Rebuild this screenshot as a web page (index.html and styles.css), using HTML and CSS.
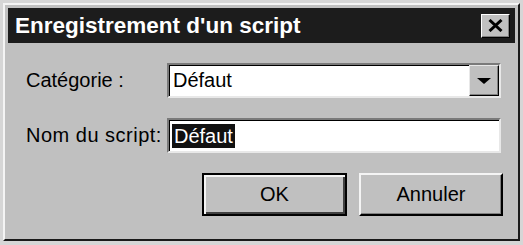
FILE: index.html
```html
<!DOCTYPE html>
<html lang="fr">

<head>
  <meta charset="UTF-8">
  <title>Enregistrement d'un script</title>
  <link rel="stylesheet" href="styles.css">
</head>

<body>
  <div class="dialog">
    <div class="title-bar">
      <span class="title">Enregistrement d'un script</span>
      <span class="close">
        <svg width="15" height="13" viewBox="0 0 15 13">
          <path d="M1.5 1 L13.5 12 M13.5 1 L1.5 12" stroke="#000" stroke-width="3" fill="none" />
        </svg>
      </span>
    </div>

    <div class="dialog-body">
      <div class="row">
        <label class="row-label">Catégorie :</label>
        <div class="select">
          <span class="select-value">Défaut</span>
          <span class="select-arrow"><span class="triangle"></span></span>
        </div>
      </div>
      <div class="row">
        <label class="row-label label-wide">Nom du script:</label>
        <div class="field"><span class="field-selected">Défaut</span></div>
      </div>
      <div class="buttons">
        <button class="btn btn-default">OK</button>
        <button class="btn">Annuler</button>
      </div>
    </div>
  </div>
</body>

</html>
```

FILE: styles.css
```css
* {
  padding: 0;
  margin: 0;
  box-sizing: border-box;
}

body {
  background: #d6d6d6;
  font-family: "Liberation Sans", Arial, sans-serif;
  color: #000;
}

.dialog {
  width: 517px;
  height: 238px;
  margin: 3px 0 0 3px;
  padding: 3px;
  background: #c0c0c0;
  border: 2px solid;
  border-color: #f4f4f4 #1a1a1a #1a1a1a #f4f4f4;
}

.title-bar {
  display: flex;
  align-items: center;
  justify-content: space-between;
  height: 35px;
  padding: 0 5px 0 7px;
  background: #1c1c1c;
}

.title {
  font-size: 22.5px;
  font-weight: bold;
  color: #fff;
}

.close {
  display: flex;
  align-items: center;
  justify-content: center;
  width: 29px;
  height: 24px;
  background: #c0c0c0;
  border: 1px solid;
  border-color: #fff #000 #000 #fff;
  box-shadow: inset -1px -1px #808080;
}

.dialog-body {
  padding: 20px 12px 0 18px;
}

.row {
  display: flex;
  align-items: center;
  height: 35px;
  margin-bottom: 20px;
}

.row-label {
  width: 141px;
  font-size: 20px;
}

/* le libellé d'origine est un peu plus large */
.label-wide {
  letter-spacing: 0.5px;
}

.select,
.field {
  display: flex;
  align-items: center;
  width: 334px;
  height: 35px;
  background: #fff;
  border: 2px solid;
  border-color: #7a7a7a #e8e8e8 #e8e8e8 #7a7a7a;
  box-shadow: inset 1px 1px #000;
  font-size: 20px;
}

.select-value {
  flex: 1;
  padding-left: 4px;
}

.select-arrow {
  display: flex;
  align-items: center;
  justify-content: center;
  width: 30px;
  height: 31px;
  background: #c0c0c0;
  border: 1px solid;
  border-color: #e8e8e8 #000 #000 #e8e8e8;
  box-shadow: inset -1px -1px #808080;
}

.triangle {
  width: 0;
  height: 0;
  border-left: 7px solid transparent;
  border-right: 7px solid transparent;
  border-top: 6px solid #000;
}

.field {
  padding-left: 3px;
}

.field-selected {
  background: #111;
  color: #fff;
  padding: 0 2px;
  line-height: 24px;
}

.buttons {
  display: flex;
  justify-content: flex-end;
  gap: 12px;
  margin-top: 9px;
}

.btn {
  width: 144px;
  height: 43px;
  background: #c0c0c0;
  font-family: "Liberation Sans", Arial, sans-serif;
  font-size: 20px;
  color: #000;
  border: 2px solid;
  border-color: #f4f4f4 #000 #000 #f4f4f4;
  box-shadow: inset -1px -1px #808080;
}

.btn-default {
  width: 145px;
  border: 2px solid #000;
  box-shadow: inset 2px 2px #f4f4f4, inset -2px -2px #404040;
}
```
